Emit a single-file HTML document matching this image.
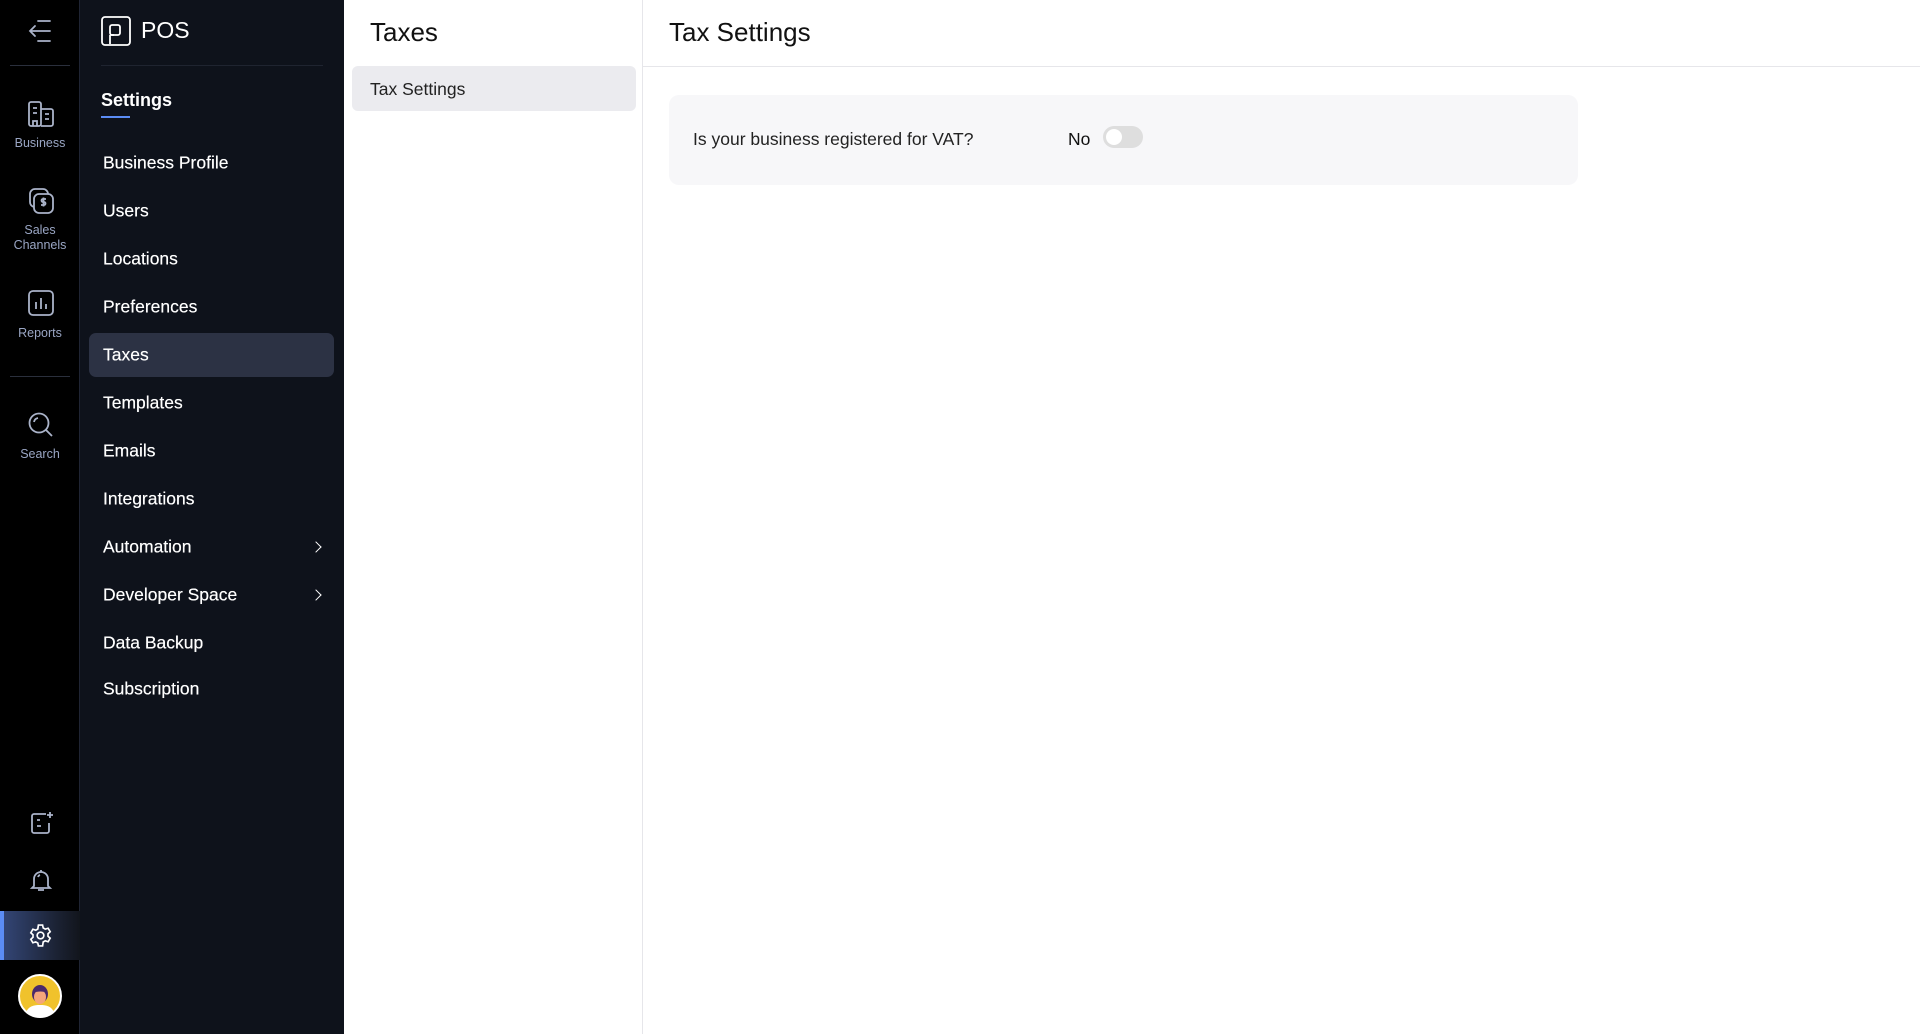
<!DOCTYPE html>
<html><head><meta charset="utf-8"><style>
*{box-sizing:border-box;margin:0;padding:0}
body{width:1920px;height:1034px;font-family:"Liberation Sans",sans-serif;background:#fff;position:relative;overflow:hidden}
.rail{position:absolute;left:0;top:0;width:80px;height:1034px;background:#000;border-right:1px solid #1f2433}
.menu{position:absolute;left:80px;top:0;width:264px;height:1034px;background:#0e121b}
.sub{position:absolute;left:344px;top:0;width:299px;height:1034px;border-right:1px solid #e6e6ea}
.abs{position:absolute}
.rl{position:absolute;left:0;width:80px;text-align:center;color:#9aa6c4;font-size:12.5px;line-height:15px}
.mi{position:absolute;left:103px;color:#fff;font-size:17.5px;transform:translateY(-50%);margin-top:1px;text-shadow:0 0 0.4px #fff}
.chev{position:absolute;left:312px;width:8px;height:8px;border-right:1.8px solid #fff;border-top:1.8px solid #fff;transform:translateY(-50%) rotate(45deg)}
</style></head><body>
<div class="rail">
 <svg class="abs" style="left:28px;top:18px" width="26" height="26" viewBox="0 0 26 26" fill="none" stroke="#aab3c9" stroke-width="1.8" stroke-linecap="round"><path d="M10 3h12M2 13h20M10 23h12M7 8l-5 5 5 5"/></svg>
 <div class="abs" style="left:10px;top:65px;width:60px;height:1px;background:#2a2f3c"></div>
 <svg class="abs" style="left:28px;top:101px" width="26" height="26" viewBox="0 0 26 26" fill="none" stroke="#aab3c9" stroke-width="1.8"><rect x="1" y="1" width="12" height="24" rx="2"/><path d="M13 8h10a2 2 0 0 1 2 2v13a2 2 0 0 1-2 2H13M5 7h4M5 12h4M17 13h4M17 18h4M5 25v-5h4v5"/></svg>
 <div class="rl" style="top:136px">Business</div>
 <svg class="abs" style="left:28px;top:188px" width="26" height="26" viewBox="0 0 26 26" fill="none" stroke="#aab3c9" stroke-width="1.8"><path d="M6 19a5 5 0 0 1-4-5V6a5 5 0 0 1 5-5h8a5 5 0 0 1 5 5"/><rect x="6" y="6" width="19" height="19" rx="5"/><path d="M18 11h-3a1.5 1.5 0 0 0 0 3h1a1.5 1.5 0 0 1 0 3h-3M15.5 9.5v9"/></svg>
 <div class="rl" style="top:223px">Sales<br>Channels</div>
 <svg class="abs" style="left:28px;top:290px" width="26" height="26" viewBox="0 0 26 26" fill="none" stroke="#aab3c9" stroke-width="1.8"><rect x="1" y="1" width="24" height="24" rx="4"/><path d="M8 12v7M13 8v11M18 14v5"/></svg>
 <div class="rl" style="top:326px">Reports</div>
 <div class="abs" style="left:10px;top:376px;width:60px;height:1px;background:#2a2f3c"></div>
 <svg class="abs" style="left:28px;top:412px" width="26" height="26" viewBox="0 0 26 26" fill="none" stroke="#aab3c9" stroke-width="1.8"><circle cx="11" cy="11" r="9.5"/><path d="M18 18l6 6M6 10a5 5 0 0 1 4-4"/></svg>
 <div class="rl" style="top:447px">Search</div>
 <svg class="abs" style="left:30px;top:811px" width="24" height="24" viewBox="0 0 24 24" fill="none" stroke="#aab3c9" stroke-width="1.8"><path d="M16 3H4a2 2 0 0 0-2 2v15a2 2 0 0 0 2 2h13a2 2 0 0 0 2-2v-8M7 9h3M7 15h4M20 1v6M17 4h6"/></svg>
 <svg class="abs" style="left:29px;top:868px" width="24" height="24" viewBox="0 0 24 24" fill="none" stroke="#aab3c9" stroke-width="1.8"><path d="M12 2v2M5 18V11a7 7 0 0 1 14 0v7l2 2H3zM9 22h6M9 9a3 3 0 0 1 2-2"/></svg>
 <div class="abs" style="left:0;top:911px;width:80px;height:49px;background:linear-gradient(90deg,#334575,#1b2233 70%,#12151c);border-left:4px solid #5b8cf5"></div>
 <svg class="abs" style="left:28px;top:923px" width="25" height="25" viewBox="0 0 24 24" fill="none" stroke="#fff" stroke-width="1.6"><circle cx="12" cy="12" r="3.2"/><path d="M10 2h4l.6 2.8 2 1.1 2.7-.9 2 3.4-2.1 1.9v2.4l2.1 1.9-2 3.4-2.7-.9-2 1.1L14 22h-4l-.6-2.8-2-1.1-2.7.9-2-3.4 2.1-1.9v-2.4L2.7 9.4l2-3.4 2.7.9 2-1.1z"/></svg>
 <svg class="abs" style="left:18px;top:974px" width="44" height="44" viewBox="0 0 44 44"><circle cx="22" cy="22" r="21" fill="#f0c22c" stroke="#fff" stroke-width="2"/><path d="M8 38c3-6 8-7 14-7s11 1 14 7a21 21 0 0 1-28 0z" fill="#fff"/><ellipse cx="22" cy="20" rx="8" ry="9" fill="#4a2a6b"/><ellipse cx="22" cy="23" rx="6" ry="7" fill="#f4a57a"/><path d="M15 19a7 7 0 0 1 14 0c-3-2-10-2-14 0z" fill="#4a2a6b"/></svg>
</div>
<div class="menu">
 <svg class="abs" style="left:21px;top:16px" width="30" height="30" viewBox="0 0 30 30" fill="none" stroke="#fff" stroke-width="1.8"><rect x="1" y="1" width="28" height="28" rx="3"/><rect x="9" y="9" width="10" height="10" rx="2"/><path d="M9 19v9M9 19h4"/></svg>
 <div class="abs" style="left:61px;top:17px;color:#fff;font-size:23px">POS</div>
 <div class="abs" style="left:21px;top:65px;width:222px;height:1px;background:#1f2430"></div>
 <div class="abs" style="left:21px;top:90px;color:#fff;font-size:18px;font-weight:bold">Settings</div>
 <div class="abs" style="left:21px;top:116px;width:29px;height:2px;background:#5b8cf5"></div>
 <div class="abs" style="left:9px;top:333px;width:245px;height:44px;border-radius:7px;background:#2c3244"></div>
</div>
<div class="mi" style="top:162px">Business Profile</div>
<div class="mi" style="top:210px">Users</div>
<div class="mi" style="top:258px">Locations</div>
<div class="mi" style="top:306px">Preferences</div>
<div class="mi" style="top:354px">Taxes</div>
<div class="mi" style="top:402px">Templates</div>
<div class="mi" style="top:450px">Emails</div>
<div class="mi" style="top:498px">Integrations</div>
<div class="mi" style="top:546px">Automation</div><div class="chev" style="top:547px"></div>
<div class="mi" style="top:594px">Developer Space</div><div class="chev" style="top:595px"></div>
<div class="mi" style="top:642px">Data Backup</div>
<div class="mi" style="top:688px">Subscription</div>
<div class="sub">
 <div class="abs" style="left:26px;top:17px;font-size:26px;color:#111">Taxes</div>
 <div class="abs" style="left:8px;top:66px;width:284px;height:45px;border-radius:6px;background:#ebebef"></div>
 <div class="abs" style="left:26px;top:79px;font-size:17.5px;color:#222">Tax Settings</div>
</div>
<div class="abs" style="left:643px;top:66px;width:1277px;height:1px;background:#e6e6ea"></div>
<div class="abs" style="left:669px;top:17px;font-size:26px;color:#111">Tax Settings</div>
<div class="abs" style="left:669px;top:95px;width:909px;height:90px;border-radius:10px;background:#f7f7f9"></div>
<div class="abs" style="left:693px;top:129px;font-size:17.5px;color:#222">Is your business registered for VAT?</div>
<div class="abs" style="left:1068px;top:129px;font-size:17.5px;color:#111">No</div>
<div class="abs" style="left:1103px;top:126px;width:40px;height:22px;border-radius:11px;background:#dedede"><div class="abs" style="left:3px;top:3px;width:16px;height:16px;border-radius:50%;background:#fff"></div></div>
</body></html>
